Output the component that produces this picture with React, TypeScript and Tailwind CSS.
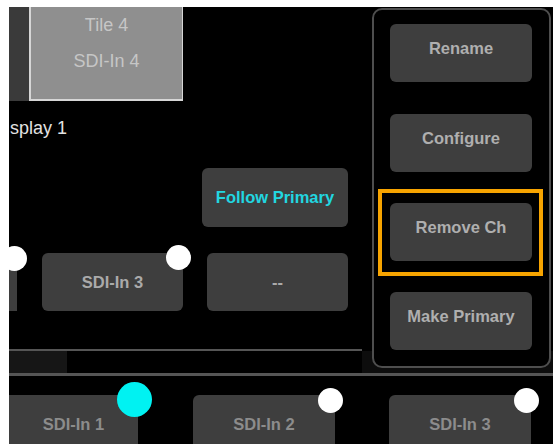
import React from "react";

const font = "font-['Liberation_Sans',Arial,sans-serif]";

function Dot({ cyan = false, className = "" }: { cyan?: boolean; className?: string }) {
  return (
    <div
      className={`absolute rounded-full ${cyan ? "bg-[#00f2f2] w-[35px] h-[35px]" : "bg-white w-[25px] h-[25px]"} ${className}`}
    />
  );
}

function PanelButton({ label }: { label: string }) {
  return (
    <div className="w-[142px] h-[58px] rounded-[6px] bg-[#3e3e3e] flex items-center justify-center pb-[10px] text-[16.5px] font-bold text-[#afafaf]">
      {label}
    </div>
  );
}

export default function App() {
  return (
    <div className={`w-[553px] h-[444px] bg-white pt-[7px] pl-[9px] overflow-hidden ${font}`}>
      <div className="w-[544px] h-[437px] bg-black overflow-hidden flex flex-col">
        {/* top section */}
        <div className="flex flex-none h-[366px]">
          {/* left column */}
          <div className="w-[353px] flex-none flex flex-col">
            <div className="flex flex-none h-[94px]">
              <div className="w-[20px] bg-[#3a3a3a]" />
              <div className="w-[154px] bg-[#8f8f8f] border-l-[2px] border-r-[1px] border-b-[2px] border-[#d6d6d6] flex flex-col items-center text-[18px] text-[#c6c6c6]">
                <div className="mt-[6px] leading-[24px]">Tile 4</div>
                <div className="mt-[12px] leading-[24px]">SDI-In 4</div>
              </div>
            </div>
            <div className="flex-none mt-[15px] ml-[1px] h-[24px] leading-[24px] text-[18px] text-[#e2e2e2]">splay 1</div>
            <div className="flex-none mt-[28px] ml-[193px] w-[146px] h-[59px] rounded-[6px] bg-[#3e3e3e] flex items-center justify-center text-[16.5px] font-bold text-[#22d6e0]">
              Follow Primary
            </div>
            <div className="flex-none mt-[26px] flex h-[58px]">
              <div className="relative w-[8px] h-full bg-[#3e3e3e]">
                <Dot className="left-[-7px] top-[-7px]" />
              </div>
              <div className="relative ml-[25px] w-[141px] h-full rounded-[6px] bg-[#3e3e3e] flex items-center justify-center text-[16.5px] font-bold text-[#aaaaaa]">
                SDI-In 3
                <Dot className="right-[-8px] top-[-8px]" />
              </div>
              <div className="ml-[24px] w-[141px] h-full rounded-[6px] bg-[#3e3e3e] flex items-center justify-center text-[16.5px] font-bold text-[#aaaaaa]">
                --
              </div>
            </div>
            {/* scrollbar */}
            <div className="flex-none mt-[38px] h-[2px] bg-[#555555]" />
            <div className="flex-none h-[22px] flex">
              <div className="w-[58px] bg-[#161616]" />
            </div>
          </div>
          {/* right column: side menu */}
          <div className="flex-1 flex flex-col relative">
            <div className="absolute left-0 right-0 bottom-0 h-[22px] bg-[#0d0d0d]" />
            <div className="relative flex-none mt-[1px] ml-[10px] w-[179px] h-[360px] rounded-[10px] border-[2px] border-[#4e4e4e] bg-black flex flex-col">
              <div className="flex-none ml-[16px] mt-[14px]">
                <PanelButton label="Rename" />
              </div>
              <div className="flex-none ml-[16px] mt-[32px]">
                <PanelButton label="Configure" />
              </div>
              <div className="flex-none ml-[4px] mt-[17px] w-[165px] h-[87px] border-[4px] border-[#f7a400] pl-[8px] pt-[10px]">
                <PanelButton label="Remove Ch" />
              </div>
              <div className="flex-none ml-[16px] mt-[16px]">
                <PanelButton label="Make Primary" />
              </div>
            </div>
          </div>
        </div>
        {/* bottom line */}
        <div className="flex-none h-[3px] bg-[#555555]" />
        {/* bottom row */}
        <div className="flex flex-none mt-[19px] h-[58px]">
          <div className="relative w-[129px] h-full rounded-r-[6px] bg-[#3e3e3e] flex items-center justify-center text-[16.5px] font-bold text-[#8c8c8c]">
            SDI-In 1
            <Dot cyan className="right-[-14px] top-[-13px]" />
          </div>
          <div className="relative ml-[55px] w-[142px] h-full rounded-[6px] bg-[#3e3e3e] flex items-center justify-center text-[16.5px] font-bold text-[#8c8c8c]">
            SDI-In 2
            <Dot className="right-[-8px] top-[-7px]" />
          </div>
          <div className="relative ml-[54px] w-[142px] h-full rounded-[6px] bg-[#3e3e3e] flex items-center justify-center text-[16.5px] font-bold text-[#8c8c8c]">
            SDI-In 3
            <Dot className="right-[-8px] top-[-7px]" />
          </div>
        </div>
      </div>
    </div>
  );
}
